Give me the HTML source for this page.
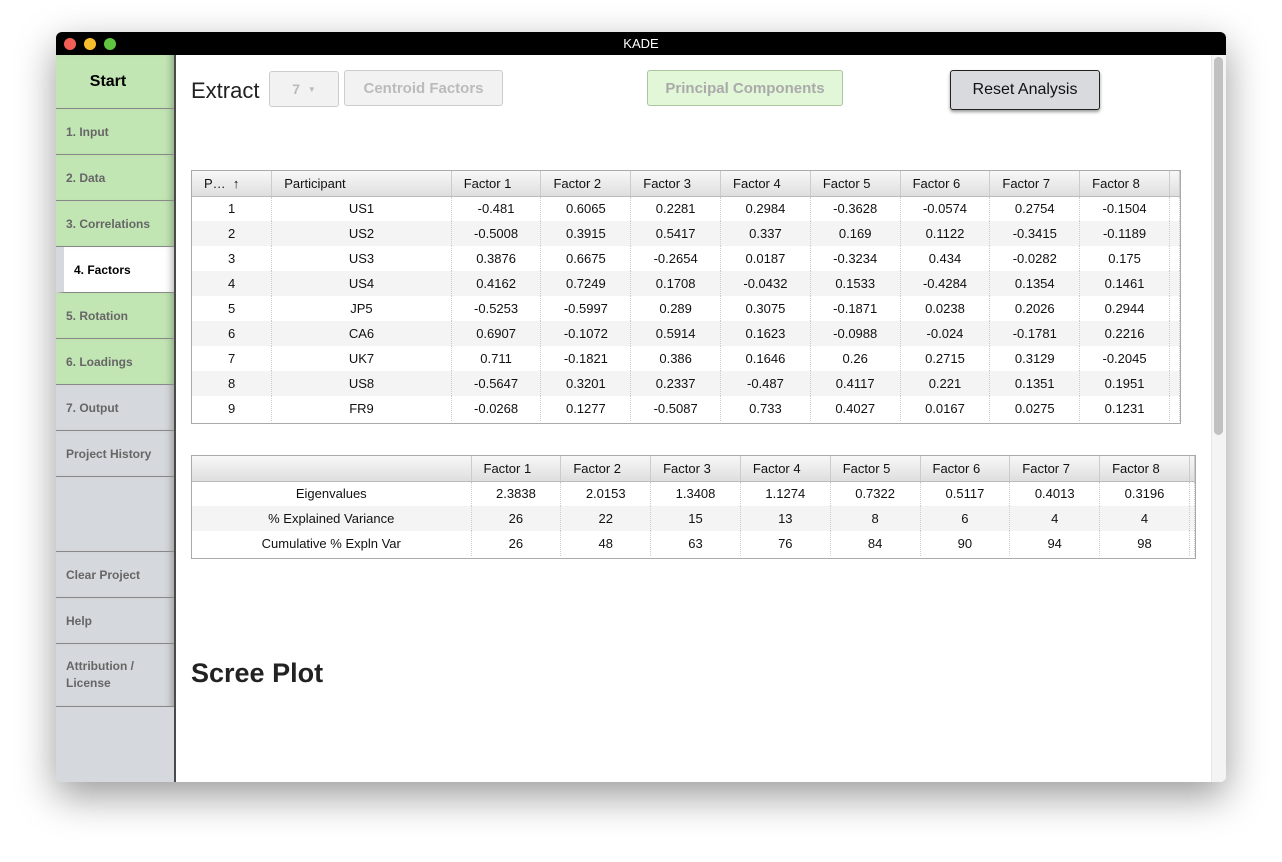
<!DOCTYPE html>
<html><head><style>
*{box-sizing:border-box;margin:0;padding:0}
body{width:1282px;height:862px;background:#fff;font-family:"Liberation Sans",sans-serif;position:relative;overflow:hidden}
.win{position:absolute;left:56px;top:32px;width:1170px;height:750px;border-radius:6px;overflow:hidden;box-shadow:0 14px 40px rgba(0,0,0,.4);background:#fff}
.title{position:absolute;left:0;top:0;width:100%;height:23px;background:#000;color:#fff;text-align:center;font-size:13px;line-height:23px}
.dot{position:absolute;top:6px;width:12px;height:12px;border-radius:50%}
.side{position:absolute;left:0;top:23px;width:120px;height:727px;background:#d5d8dc;border-right:2px solid #4a4a4a}
.it{position:absolute;left:0;width:118px;height:46px;border-bottom:1px solid #888;font-size:12px;font-weight:bold;color:#666;padding-left:10px;display:flex;align-items:center;box-shadow:inset -8px 0 8px -6px rgba(0,0,0,.3)}
.g{background:#c2e5b4}
.main{position:absolute;left:120px;top:23px;width:1050px;height:727px}
.btn{position:absolute;height:36px;border:1px solid #ccc;border-radius:3px;font-size:15px;display:flex;align-items:center;justify-content:center;font-weight:bold}
table{border-collapse:collapse;position:absolute;font-size:13px;color:#111}
td,th{height:25px;text-align:center;font-weight:normal;padding:0}
th{background:linear-gradient(#f8f8f8,#dedede);border-right:1px solid #ccc;border-bottom:1px solid #bbb;text-align:left;padding-left:12px}
td{border-right:1px dotted #ccc}
tr:nth-child(odd) td{background:#f4f4f4}
.tb{position:absolute;border:1px solid #aaa;overflow:hidden;background:#fff}
</style></head><body>
<div class="win">
<div class="title">KADE</div>
<div class="dot" style="left:8px;background:#f25f57"></div>
<div class="dot" style="left:28px;background:#f6bd2f"></div>
<div class="dot" style="left:48px;background:#5fc43f"></div>
<div class="side">
<div class="it g" style="top:0;height:54px;justify-content:center;padding:0;color:#000;font-size:16px;padding-right:14px">Start</div>
<div class="it g" style="top:54px">1. Input</div>
<div class="it g" style="top:100px">2. Data</div>
<div class="it g" style="top:146px">3. Correlations</div>
<div class="it" style="top:192px;background:#fff;color:#000;border-left:8px solid #d5d8dc;padding-left:10px">4. Factors</div>
<div class="it g" style="top:238px">5. Rotation</div>
<div class="it g" style="top:284px">6. Loadings</div>
<div class="it" style="top:330px">7. Output</div>
<div class="it" style="top:376px">Project History</div>
<div class="it" style="top:422px;height:75px"></div>
<div class="it" style="top:497px">Clear Project</div>
<div class="it" style="top:543px">Help</div>
<div class="it" style="top:589px;height:63px;line-height:17px">Attribution /<br>License</div>
</div>
<div class="main">
<div style="position:absolute;left:15px;top:23px;font-size:22px;color:#222">Extract</div>
<div class="btn" style="left:93px;top:16px;width:70px;color:#bbb;background:#f2f2f2;font-size:14px">7 &nbsp;<span style="font-size:8px">▼</span></div>
<div class="btn" style="left:168px;top:15px;width:159px;color:#bbb;background:#f2f2f2">Centroid Factors</div>
<div class="btn" style="left:471px;top:15px;width:196px;color:#aaa;background:#e2f6d8;border-color:#aac7a0">Principal Components</div>
<div class="btn" style="left:774px;top:15px;width:150px;height:40px;color:#111;background:#d8dade;border:1px solid #222;font-weight:normal;font-size:16px;box-shadow:0 2px 3px rgba(0,0,0,.4)">Reset Analysis</div>
<div class="tb" style="left:15px;top:115px;width:990px;height:254px">
<table style="left:0;top:0">
<tr><th style="width:80px">P… &nbsp;<b>↑</b></th><th style="width:180px">Participant</th><th style="width:90px">Factor 1</th><th style="width:90px">Factor 2</th><th style="width:90px">Factor 3</th><th style="width:90px">Factor 4</th><th style="width:90px">Factor 5</th><th style="width:90px">Factor 6</th><th style="width:90px">Factor 7</th><th style="width:90px">Factor 8</th><th style="width:10px;padding:0"></th></tr>
<tr><td>1</td><td>US1</td><td>-0.481</td><td>0.6065</td><td>0.2281</td><td>0.2984</td><td>-0.3628</td><td>-0.0574</td><td>0.2754</td><td>-0.1504</td><td></td></tr>
<tr><td>2</td><td>US2</td><td>-0.5008</td><td>0.3915</td><td>0.5417</td><td>0.337</td><td>0.169</td><td>0.1122</td><td>-0.3415</td><td>-0.1189</td><td></td></tr>
<tr><td>3</td><td>US3</td><td>0.3876</td><td>0.6675</td><td>-0.2654</td><td>0.0187</td><td>-0.3234</td><td>0.434</td><td>-0.0282</td><td>0.175</td><td></td></tr>
<tr><td>4</td><td>US4</td><td>0.4162</td><td>0.7249</td><td>0.1708</td><td>-0.0432</td><td>0.1533</td><td>-0.4284</td><td>0.1354</td><td>0.1461</td><td></td></tr>
<tr><td>5</td><td>JP5</td><td>-0.5253</td><td>-0.5997</td><td>0.289</td><td>0.3075</td><td>-0.1871</td><td>0.0238</td><td>0.2026</td><td>0.2944</td><td></td></tr>
<tr><td>6</td><td>CA6</td><td>0.6907</td><td>-0.1072</td><td>0.5914</td><td>0.1623</td><td>-0.0988</td><td>-0.024</td><td>-0.1781</td><td>0.2216</td><td></td></tr>
<tr><td>7</td><td>UK7</td><td>0.711</td><td>-0.1821</td><td>0.386</td><td>0.1646</td><td>0.26</td><td>0.2715</td><td>0.3129</td><td>-0.2045</td><td></td></tr>
<tr><td>8</td><td>US8</td><td>-0.5647</td><td>0.3201</td><td>0.2337</td><td>-0.487</td><td>0.4117</td><td>0.221</td><td>0.1351</td><td>0.1951</td><td></td></tr>
<tr><td>9</td><td>FR9</td><td>-0.0268</td><td>0.1277</td><td>-0.5087</td><td>0.733</td><td>0.4027</td><td>0.0167</td><td>0.0275</td><td>0.1231</td><td></td></tr>
</table></div>
<div class="tb" style="left:15px;top:400px;width:1005px;height:104px">
<table style="left:0;top:0">
<tr><th style="width:280px"></th><th style="width:90px">Factor 1</th><th style="width:90px">Factor 2</th><th style="width:90px">Factor 3</th><th style="width:90px">Factor 4</th><th style="width:90px">Factor 5</th><th style="width:90px">Factor 6</th><th style="width:90px">Factor 7</th><th style="width:90px">Factor 8</th><th style="width:5px;padding:0"></th></tr>
<tr><td style="background:#fff">Eigenvalues</td><td style="background:#fff">2.3838</td><td style="background:#fff">2.0153</td><td style="background:#fff">1.3408</td><td style="background:#fff">1.1274</td><td style="background:#fff">0.7322</td><td style="background:#fff">0.5117</td><td style="background:#fff">0.4013</td><td style="background:#fff">0.3196</td><td style="background:#fff"></td></tr>
<tr><td style="background:#f4f4f4">% Explained Variance</td><td style="background:#f4f4f4">26</td><td style="background:#f4f4f4">22</td><td style="background:#f4f4f4">15</td><td style="background:#f4f4f4">13</td><td style="background:#f4f4f4">8</td><td style="background:#f4f4f4">6</td><td style="background:#f4f4f4">4</td><td style="background:#f4f4f4">4</td><td style="background:#f4f4f4"></td></tr>
<tr><td style="background:#fff">Cumulative % Expln Var</td><td style="background:#fff">26</td><td style="background:#fff">48</td><td style="background:#fff">63</td><td style="background:#fff">76</td><td style="background:#fff">84</td><td style="background:#fff">90</td><td style="background:#fff">94</td><td style="background:#fff">98</td><td style="background:#fff"></td></tr>
</table></div>
<div style="position:absolute;left:15px;top:603px;font-size:27px;font-weight:bold;color:#222">Scree Plot</div>
<div style="position:absolute;left:1035px;top:0;width:15px;height:727px;background:#f4f4f4;border-left:1px solid #e6e6e6"></div>
<div style="position:absolute;left:1038px;top:2px;width:9px;height:378px;background:#c1c1c1;border-radius:5px"></div>
</div>
</div>
</body></html>
